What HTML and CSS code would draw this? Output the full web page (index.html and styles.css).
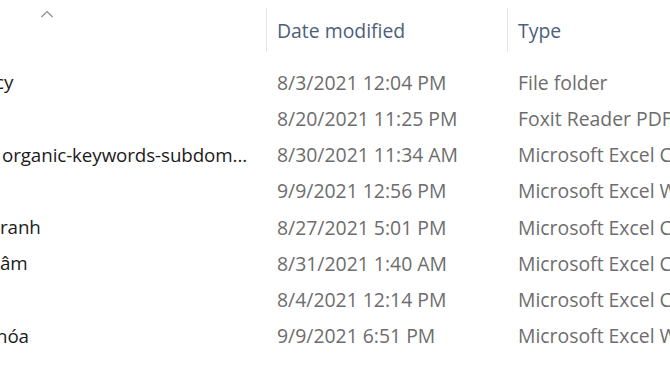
FILE: index.html
```html
<!DOCTYPE html>
<html>
<head>
<meta charset="utf-8">
<link rel="stylesheet" href="styles.css">
</head>
<body>
<div class="list">
  <div class="header">
    <div class="hcell name-h">
      <svg class="caret" width="14" height="8" viewBox="0 0 14 8"><polyline points="1.5,7 7,1.5 12.5,7" fill="none" stroke="#8c8c8c" stroke-width="1.2"/></svg>
    </div>
    <div class="hcell sep">Date modified</div>
    <div class="hcell sep">Type</div>
  </div>
  <div class="row"><span class="name clip-c">cy</span><span class="date">8/3/2021 12:04 PM</span><span class="type">File folder</span></div>
  <div class="row"><span class="name"></span><span class="date">8/20/2021 11:25 PM</span><span class="type">Foxit Reader PDF Document</span></div>
  <div class="row"><span class="name pad">organic-keywords-subdom...</span><span class="date">8/30/2021 11:34 AM</span><span class="type">Microsoft Excel Comma Separated Values File</span></div>
  <div class="row"><span class="name"></span><span class="date">9/9/2021 12:56 PM</span><span class="type">Microsoft Excel Worksheet</span></div>
  <div class="row"><span class="name">ranh</span><span class="date">8/27/2021 5:01 PM</span><span class="type">Microsoft Excel Comma Separated Values File</span></div>
  <div class="row"><span class="name">âm</span><span class="date">8/31/2021 1:40 AM</span><span class="type">Microsoft Excel Comma Separated Values File</span></div>
  <div class="row"><span class="name"></span><span class="date">8/4/2021 12:14 PM</span><span class="type">Microsoft Excel Comma Separated Values File</span></div>
  <div class="row"><span class="name clip-h">hóa</span><span class="date">9/9/2021 6:51 PM</span><span class="type">Microsoft Excel Worksheet</span></div>
</div>
</body>
</html>
```
FILE: styles.css
```css
html, body {
  margin: 0;
  padding: 0;
  background: #ffffff;
  overflow: hidden;
}
body {
  width: 670px;
  height: 377px;
  font-family: "Open Sans", "Noto Sans", sans-serif;
  font-size: 19.4px;
}
.list {
  display: flex;
  flex-direction: column;
  width: 670px;
  overflow: hidden;
}
.header, .row {
  display: grid;
  grid-template-columns: 266px 241px 163px;
  white-space: nowrap;
}
.header {
  height: 64px;
  align-items: start;
}
.hcell {
  height: 44px;
  margin-top: 8px;
  display: flex;
  align-items: center;
  color: #4c607a;
  padding-left: 11px;
  overflow: hidden;
}
.name-h {
  padding-left: 0;
  position: relative;
}
.caret {
  position: absolute;
  left: 40px;
  top: 2px;
}
.sep {
  border-left: 1px solid #e5e5e5;
  padding-left: 10px;
}
.row {
  height: 36.25px;
  align-items: center;
}
.row span {
  overflow: hidden;
}
.name {
  color: #1b1b1b;
  font-size: 18.8px;
  letter-spacing: -0.1px;
}
.pad {
  padding-left: 2px;
}
.clip-c {
  text-indent: -5px;
}
.clip-h {
  text-indent: -4px;
}
.date, .type {
  color: #6d6d6d;
  padding-left: 11px;
}
```
